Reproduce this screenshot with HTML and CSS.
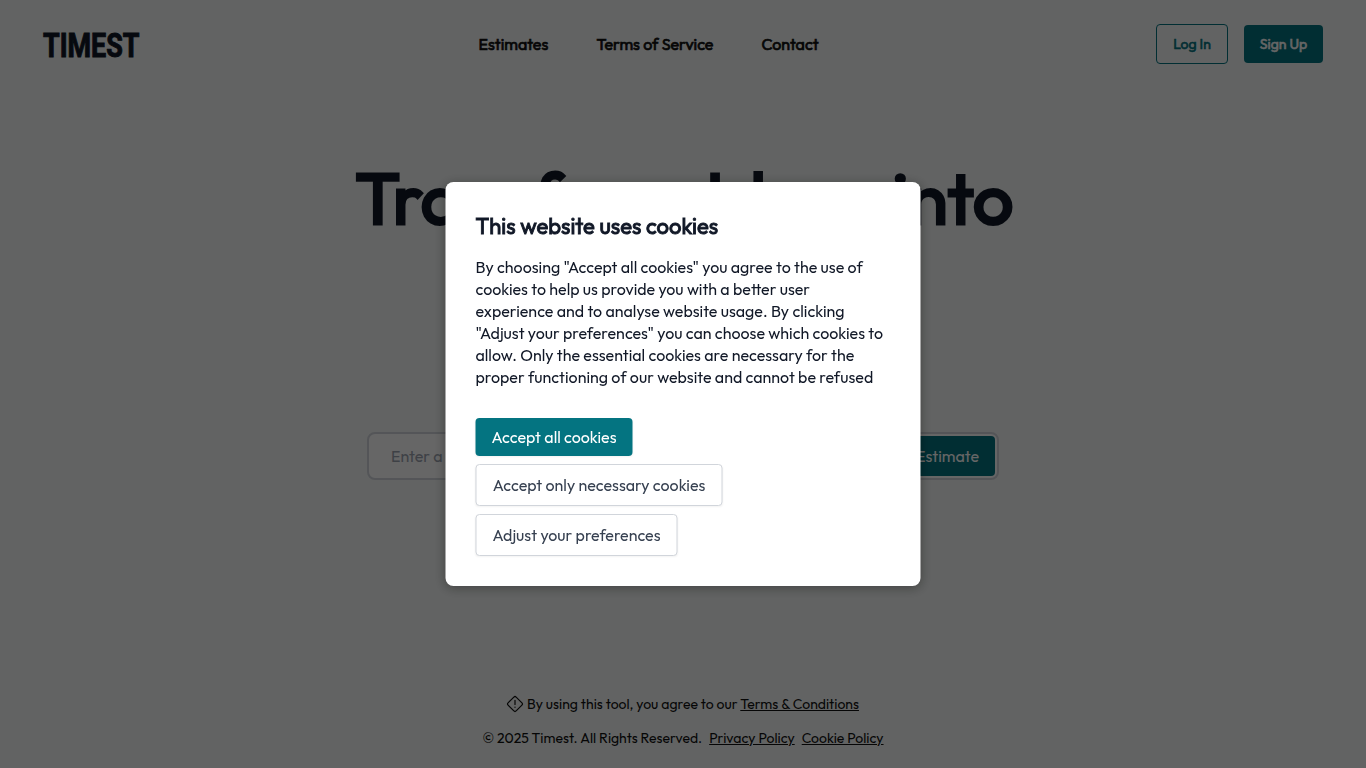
FILE: index.html
```html
<!DOCTYPE html>
<html lang="en">
<head>
    <meta charset="UTF-8">
    <meta name="viewport" content="width=device-width, initial-scale=1.0">
    <title>Timest</title>
    <link rel="stylesheet" href="styles.css">
</head>
<body>
    <div class="page">
        <header class="header">
            <a class="logo" href="#">
                <svg width="98" height="44" viewBox="0 0 98 44">
                    <text x="0" y="35.3" textLength="96.5" lengthAdjust="spacingAndGlyphs">TIMEST</text>
                </svg>
            </a>
            <nav class="nav">
                <a class="nav-estimates" href="#">Estimates</a>
                <a class="nav-terms" href="#">Terms of Service</a>
                <a class="nav-contact" href="#">Contact</a>
            </nav>
            <div class="header-buttons">
                <a class="btn-login" href="#">Log In</a>
                <a class="btn-signup" href="#">Sign Up</a>
            </div>
        </header>

        <main class="hero">
            <h1>Transform Ideas into</h1>
            <form class="search">
                <input type="text" placeholder="Enter a">
                <button type="button">Get Estimate</button>
            </form>
        </main>

        <footer class="footer">
            <p class="agree">
                <svg width="18" height="18" viewBox="0 0 18 18" fill="none" stroke="currentColor" stroke-width="1.2" stroke-linecap="round">
                    <rect x="3.3" y="3.3" width="11.4" height="11.4" rx="1.6" transform="rotate(45 9 9)"/>
                    <path d="M9 5.3v4.2M9 12v.3"/>
                </svg>
                <span>By using this tool, you agree to our <a href="#">Terms &amp; Conditions</a></span>
            </p>
            <p class="copyright">
                <span class="rights">© 2025 Timest. All Rights Reserved.</span>
                <a class="privacy" href="#">Privacy Policy</a>
                <a class="cookie" href="#">Cookie Policy</a>
            </p>
        </footer>
    </div>

    <div class="overlay">
        <div class="modal">
            <h2>This website uses cookies</h2>
            <p>By choosing "Accept all cookies" you agree to the use of
            cookies to help us provide you with a better user
            experience and to analyse website usage. By clicking
            "Adjust your preferences" you can choose which cookies to
            allow. Only the essential cookies are necessary for the
            proper functioning of our website and cannot be refused</p>
            <div class="modal-buttons">
                <button type="button" class="accept">Accept all cookies</button>
                <button type="button" class="necessary">Accept only necessary cookies</button>
                <button type="button" class="adjust">Adjust your preferences</button>
            </div>
        </div>
    </div>
</body>
</html>
```
FILE: styles.css
```css
* {
    box-sizing: border-box;
}
body {
    margin: 0;
    font-family: Outfit, Lato, sans-serif;
    font-size: 16px;
    color: #111827;
    overflow: hidden;
}
a {
    color: inherit;
}
h1, h2, p {
    margin: 0;
}
.page {
    display: flex;
    flex-direction: column;
    height: 100vh;
    background-color: #f5f8f7;
}

/* header */
.header {
    display: grid;
    grid-template-columns: 1fr auto 1fr;
    align-items: center;
    height: 88px;
    padding: 0 43px;
}
.logo svg {
    display: block;
    overflow: visible;
}
.logo text {
    font-family: Roboto, sans-serif;
    font-size: 34px;
    font-weight: 700;
    fill: #111827;
    stroke: #111827;
    stroke-width: 1px;
}
.nav {
    display: flex;
    gap: 48px;
    margin-right: 69px;
    color: #111;
    -webkit-text-stroke: 0.67px;
}
.nav a, .header-buttons a {
    text-decoration: none;
    white-space: nowrap;
}
.nav-estimates {
    width: 70px;
}
.nav-terms {
    width: 117px;
}
.nav-contact {
    width: 57px;
}
.header-buttons {
    display: flex;
    align-items: center;
    justify-content: flex-end;
    gap: 16px;
    font-size: 14px;
    text-align: center;
    -webkit-text-stroke: 0.55px;
}
.btn-login {
    width: 72px;
    line-height: 38px;
    border: 1px solid #047481;
    border-radius: 4px;
    color: #047481;
}
.btn-signup {
    width: 79px;
    line-height: 38px;
    border-radius: 4px;
    background-color: #047481;
    color: #fff;
}

/* hero */
.hero {
    flex: 1;
    padding-top: 66px;
}
.hero h1 {
    height: 278px;
    padding-left: 3px;
    font-size: 72px;
    line-height: 88px;
    font-weight: 400;
    text-align: center;
    white-space: nowrap;
    -webkit-text-stroke: 3px;
}
.search {
    display: flex;
    align-items: center;
    width: 632px;
    height: 48px;
    margin: 0 auto;
    padding: 0 2px 0 22px;
    border: 2px solid #d1d5db;
    border-radius: 8px;
    background-color: #fff;
}
.search input {
    flex: 1;
    border: none;
    background: none;
    padding: 0;
    font: inherit;
}
.search input::placeholder {
    color: #9ca3af;
}
.search button {
    height: 40px;
    padding: 0 16px;
    border: none;
    border-radius: 4px;
    background-color: #047481;
    color: #fff;
    font: inherit;
}

/* footer */
.footer {
    display: flex;
    flex-direction: column;
    align-items: center;
    gap: 14px;
    padding-bottom: 20px;
    font-size: 14px;
    line-height: 20px;
    color: #111;
}
.agree, .copyright {
    display: flex;
    align-items: center;
    white-space: nowrap;
}
.agree {
    gap: 3px;
    width: 354px;
}
.copyright {
    gap: 7px;
}

/* cookie modal */
.overlay {
    position: fixed;
    inset: 0;
    background-color: rgba(0, 0, 0, 0.6);
}
.modal {
    position: absolute;
    top: 50%;
    left: 50%;
    transform: translate(-50%, -50%);
    width: 475px;
    height: 404px;
    padding: 29px 30px 30px;
    border-radius: 8px;
    background-color: #fff;
    box-shadow: 0 2px 12px rgba(0, 0, 0, 0.35);
}
.modal h2 {
    font-size: 22px;
    line-height: 30px;
    font-weight: 400;
    -webkit-text-stroke: 0.9px;
}
.modal p {
    margin-top: 15px;
    line-height: 22px;
}
.modal-buttons {
    display: flex;
    flex-direction: column;
    align-items: flex-start;
    gap: 8px;
    margin-top: 30px;
}
.modal-buttons button {
    height: 42px;
    border: 1px solid #d1d5db;
    border-radius: 4px;
    background-color: #fff;
    color: #374151;
    font: inherit;
    white-space: nowrap;
    box-shadow: 0 1px 2px rgba(0, 0, 0, 0.05);
}
.modal-buttons .accept {
    width: 157px;
    height: 38px;
    border: none;
    background-color: #047481;
    color: #fff;
}
.modal-buttons .necessary {
    width: 247px;
}
.modal-buttons .adjust {
    width: 202px;
}
```
